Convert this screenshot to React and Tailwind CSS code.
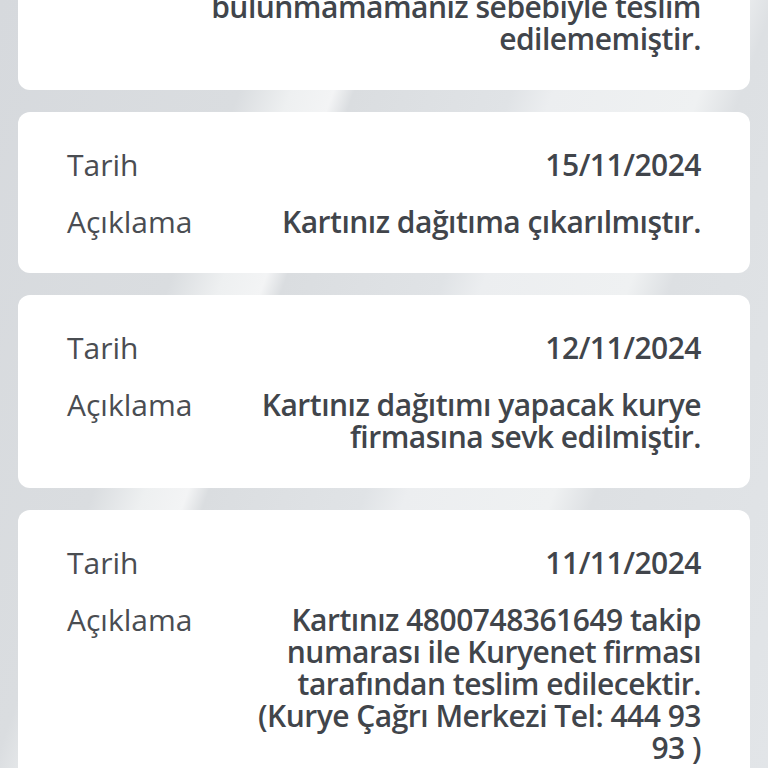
import React from "react";

const items = [
  {
    tarih: "18/11/2024",
    aciklama: "Kartınız adresinizde\nbulunmamamaniz sebebiyle teslim\nedilememiştir.",
  },
  { tarih: "15/11/2024", aciklama: "Kartınız dağıtıma çıkarılmıştır." },
  {
    tarih: "12/11/2024",
    aciklama: "Kartınız dağıtımı yapacak kurye\nfirmasına sevk edilmiştir.",
  },
  {
    tarih: "11/11/2024",
    aciklama:
      "Kartınız 4800748361649 takip\nnumarası ile Kuryenet firması\ntarafından teslim edilecektir.\n(Kurye Çağrı Merkezi Tel: 444 93\n93 )",
  },
];

function Row({ label, value }) {
  return (
    <div className="flex items-start">
      <div className="w-[130px] shrink-0 text-[#4a4d52]">{label}</div>
      <div className="flex-1 whitespace-pre-line text-right font-semibold tracking-[-0.5px] text-[#41454b]">
        {value}
      </div>
    </div>
  );
}

function HareketCard({ item, first }) {
  return (
    <div
      className={
        "rounded-[12px] bg-white px-[49px] pt-[37px] pb-[35px] flex flex-col gap-[25px] " +
        (first ? "-mt-[135px]" : "")
      }
    >
      <Row label="Tarih" value={item.tarih} />
      <Row label="Açıklama" value={item.aciklama} />
    </div>
  );
}

export default function App() {
  return (
    <div
      className="h-[768px] overflow-hidden bg-[#e2e5e8] bg-[linear-gradient(110deg,#d6d9dd_0%,#dadde0_26%,#eef0f1_31%,#f3f4f5_35%,#dadde0_37%,#e0e3e6_52%,#eceef0_56%,#eff1f2_70%,#dde0e3_74%,#e2e5e8_100%)] text-[30px] leading-[32px]"
      style={{ fontFamily: '"Open Sans", "Noto Sans", sans-serif' }}
    >
      <div className="px-[18px] flex flex-col gap-[22px]">
        {items.map((item, i) => (
          <HareketCard key={i} item={item} first={i === 0} />
        ))}
      </div>
    </div>
  );
}
